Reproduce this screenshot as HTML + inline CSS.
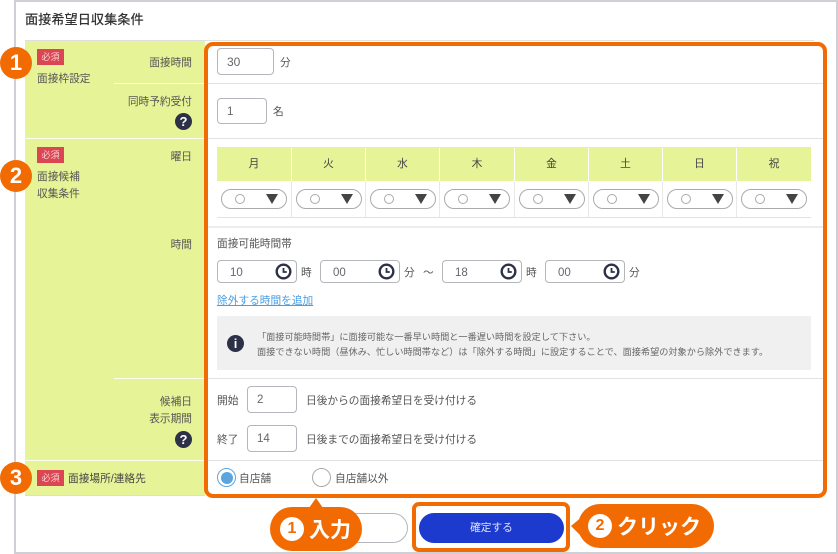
<!DOCTYPE html>
<html lang="ja"><head><meta charset="utf-8"><style>
html,body{margin:0;padding:0;background:#fff}
body{width:838px;height:554px;position:relative;overflow:hidden;font-family:"Liberation Sans","Noto Sans CJK JP",sans-serif;font-size:10.7px;color:#555}
.a,.t,.i,.c,.b,.q{position:absolute;box-sizing:border-box}
.t{white-space:nowrap;line-height:14px}
.r{text-align:right}
.i{border:1px solid #b4b6bc;border-radius:4px;background:#fff;color:#666;font-size:11.5px;padding-left:9px}
.l{position:absolute;height:1px;background:#e2e2e4}
.w{position:absolute;height:1px;background:#fbfdf0}
.b{width:27px;height:16px;background:#dc4552;color:#f7d5d8;font-size:9px;line-height:17px;text-align:center}
.c{width:32px;height:32px;border-radius:50%;background:#f26b02;color:#fff;font-size:22px;font-weight:bold;line-height:32px;text-align:center}
.q{width:17px;height:17px;border-radius:50%;background:#2d3147;color:#fff;font-size:13px;font-weight:bold;line-height:17px;text-align:center}
.h{position:absolute;top:147px;height:34px;background:#e6f396;color:#444;text-align:center;line-height:35px;font-size:10.7px}
.s{position:absolute;top:189px;width:66px;height:20px;border:1px solid #aaa;border-radius:10px;background:#fff;box-sizing:border-box}
.s:before{content:"";position:absolute;left:13px;top:4px;width:10px;height:10px;border:1px solid #aaa;border-radius:50%;box-sizing:border-box}
.s:after{content:"";position:absolute;left:44px;top:4px;border-left:6px solid transparent;border-right:6px solid transparent;border-top:10px solid #444}
.v{position:absolute;width:1px;top:147px;height:71px;background:#e8e8e8}
svg.k{position:absolute;width:17px;height:17px}
.p{position:absolute;background:#f26b02;color:#fff;font-weight:bold;font-size:21px;border-radius:22px;height:44px;line-height:47px;white-space:nowrap}
.n{display:inline-block;position:absolute;width:24px;height:24px;border-radius:50%;background:#fff;color:#f26b02;font-size:16px;line-height:24px;text-align:center;top:10px}
</style></head><body>
<div class="a" style="left:14px;top:0;width:824px;height:554px;border:2px solid #cfcfd5"></div>
<div class="t" style="left:25px;top:12px;font-size:13.2px;line-height:16px;color:#333;font-weight:500">面接希望日収集条件</div>

<div class="a" style="left:25px;top:40px;width:180px;height:456px;background:#e6f396;border-top:1px solid #dedee0;border-bottom:1px solid #dcdcdc"></div>
<div class="l" style="left:204px;top:40px;width:610px"></div>
<div class="w" style="left:114px;top:83px;width:90px"></div>
<div class="w" style="left:25px;top:138px;width:180px;height:1px"></div>
<div class="w" style="left:114px;top:378px;width:90px"></div>
<div class="w" style="left:25px;top:460px;width:180px"></div>
<div class="l" style="left:208px;top:83px;width:615px"></div>
<div class="l" style="left:208px;top:138px;width:615px"></div>
<div class="l" style="left:208px;top:226px;width:615px;height:2px;background:#ececec"></div>
<div class="l" style="left:208px;top:378px;width:615px"></div>
<div class="l" style="left:208px;top:460px;width:615px"></div>

<!-- left labels -->
<div class="b" style="left:37px;top:49px">必須</div>
<div class="t" style="left:37px;top:72px">面接枠設定</div>
<div class="b" style="left:37px;top:147px">必須</div>
<div class="t" style="left:37px;top:169px;line-height:16.5px">面接候補<br>収集条件</div>
<div class="b" style="left:37px;top:470px">必須</div>
<div class="t" style="left:68px;top:472px;color:#444">面接場所/連絡先</div>
<div class="t r" style="left:114px;width:78px;top:56px">面接時間</div>
<div class="t r" style="left:114px;width:78px;top:95px">同時予約受付</div>
<div class="q" style="left:175px;top:113px">?</div>
<div class="t r" style="left:114px;width:78px;top:150px">曜日</div>
<div class="t r" style="left:114px;width:78px;top:238px">時間</div>
<div class="t r" style="left:114px;width:78px;top:394px;line-height:17px">候補日<br>表示期間</div>
<div class="q" style="left:175px;top:431px">?</div>

<div class="c" style="left:0;top:47px">1</div>
<div class="c" style="left:0;top:160px">2</div>
<div class="c" style="left:0;top:462px">3</div>

<!-- right rows -->
<div class="i" style="left:217px;top:48px;width:57px;height:27px;line-height:27px;font-size:12px">30</div>
<div class="t" style="left:280px;top:56px">分</div>
<div class="i" style="left:217px;top:98px;width:50px;height:26px;line-height:26px">1</div>
<div class="t" style="left:273px;top:105px">名</div>

<!-- weekday table -->
<div class="a" style="left:217px;top:147px;width:594px;height:1px;background:#dedede"></div>
<div class="h" style="left:217px;width:74px">月</div>
<div class="h" style="left:292px;width:73px">火</div>
<div class="h" style="left:366px;width:73px">水</div>
<div class="h" style="left:440px;width:74px">木</div>
<div class="h" style="left:515px;width:73px">金</div>
<div class="h" style="left:589px;width:73px">土</div>
<div class="h" style="left:663px;width:73px">日</div>
<div class="h" style="left:737px;width:74px">祝</div>
<div class="v" style="left:291px;top:181px;height:37px"></div>
<div class="v" style="left:365px;top:181px;height:37px"></div>
<div class="v" style="left:439px;top:181px;height:37px"></div>
<div class="v" style="left:514px;top:181px;height:37px"></div>
<div class="v" style="left:588px;top:181px;height:37px"></div>
<div class="v" style="left:662px;top:181px;height:37px"></div>
<div class="v" style="left:736px;top:181px;height:37px"></div>
<div class="l" style="left:217px;top:217px;width:594px"></div>
<div class="s" style="left:221px"></div>
<div class="s" style="left:296px"></div>
<div class="s" style="left:370px"></div>
<div class="s" style="left:444px"></div>
<div class="s" style="left:519px"></div>
<div class="s" style="left:593px"></div>
<div class="s" style="left:667px"></div>
<div class="s" style="left:741px"></div>

<!-- time -->
<div class="t" style="left:217px;top:237px">面接可能時間帯</div>
<div class="i" style="left:217px;top:260px;width:80px;height:23px;line-height:24px;padding-left:12px">10</div>
<div class="t" style="left:301px;top:266px">時</div>
<div class="i" style="left:320px;top:260px;width:80px;height:23px;line-height:24px;padding-left:12px">00</div>
<div class="t" style="left:404px;top:266px">分</div>
<div class="t" style="left:423px;top:266px">～</div>
<div class="i" style="left:442px;top:260px;width:80px;height:23px;line-height:24px;padding-left:12px">18</div>
<div class="t" style="left:526px;top:266px">時</div>
<div class="i" style="left:545px;top:260px;width:80px;height:23px;line-height:24px;padding-left:12px">00</div>
<div class="t" style="left:629px;top:266px">分</div>
<svg class="k" style="left:275px;top:263px" viewBox="0 0 17 17"><circle cx="8.5" cy="8.5" r="6.8" fill="none" stroke="#2d3147" stroke-width="2.4"/><path d="M8.5 5V9H11.8" fill="none" stroke="#2d3147" stroke-width="1.8"/></svg>
<svg class="k" style="left:378px;top:263px" viewBox="0 0 17 17"><circle cx="8.5" cy="8.5" r="6.8" fill="none" stroke="#2d3147" stroke-width="2.4"/><path d="M8.5 5V9H11.8" fill="none" stroke="#2d3147" stroke-width="1.8"/></svg>
<svg class="k" style="left:500px;top:263px" viewBox="0 0 17 17"><circle cx="8.5" cy="8.5" r="6.8" fill="none" stroke="#2d3147" stroke-width="2.4"/><path d="M8.5 5V9H11.8" fill="none" stroke="#2d3147" stroke-width="1.8"/></svg>
<svg class="k" style="left:603px;top:263px" viewBox="0 0 17 17"><circle cx="8.5" cy="8.5" r="6.8" fill="none" stroke="#2d3147" stroke-width="2.4"/><path d="M8.5 5V9H11.8" fill="none" stroke="#2d3147" stroke-width="1.8"/></svg>
<div class="t" style="left:217px;top:294px;color:#4a9de0;text-decoration:underline">除外する時間を追加</div>

<div class="a" style="left:217px;top:316px;width:594px;height:54px;background:#f0f0f0"></div>
<div class="a" style="left:227px;top:335px;width:17px;height:17px;border-radius:50%;background:#2d3147;color:#fff;font-size:13px;font-weight:bold;line-height:17px;text-align:center">i</div>
<div class="t" style="left:257px;top:330px;font-size:9.17px;line-height:14.7px;color:#666">「面接可能時間帯」に面接可能な一番早い時間と一番遅い時間を設定して下さい。<br>面接できない時間（昼休み、忙しい時間帯など）は「除外する時間」に設定することで、面接希望の対象から除外できます。</div>

<!-- period -->
<div class="t" style="left:217px;top:394px">開始</div>
<div class="i" style="left:247px;top:386px;width:50px;height:27px;line-height:27px">2</div>
<div class="t" style="left:306px;top:394px">日後からの面接希望日を受け付ける</div>
<div class="t" style="left:217px;top:433px">終了</div>
<div class="i" style="left:247px;top:425px;width:50px;height:27px;line-height:27px">14</div>
<div class="t" style="left:306px;top:433px">日後までの面接希望日を受け付ける</div>

<div class="a" style="left:217px;top:468px;width:19px;height:19px;border:1px solid #5aa5e0;border-radius:50%;background:#fff"></div>
<div class="a" style="left:220.5px;top:471.5px;width:12px;height:12px;border-radius:50%;background:#5aa5e0"></div>
<div class="t" style="left:239px;top:472px">自店舗</div>
<div class="a" style="left:312px;top:468px;width:19px;height:19px;border:1px solid #aaa;border-radius:50%;background:#fff"></div>
<div class="t" style="left:335px;top:472px">自店舗以外</div>

<!-- orange frames -->
<div class="a" style="left:204px;top:42px;width:623px;height:456px;border:4px solid #f26b02;border-radius:9px"></div>
<div class="a" style="left:412px;top:502px;width:158px;height:50px;border:4px solid #f26b02;border-radius:7px;background:#fff"></div>

<!-- buttons -->
<div class="a" style="left:320px;top:513px;width:88px;height:30px;border:1px solid #b4b6bc;border-radius:15px;background:#fff"></div>
<div class="a" style="left:419px;top:513px;width:145px;height:30px;border-radius:15px;background:#1c3bce;color:#dfe4fa;text-align:center;line-height:31px;font-size:10.7px">確定する</div>

<!-- callouts -->
<svg class="a" style="left:309px;top:498px;width:14px;height:10px" viewBox="0 0 14 10"><path d="M0 10L7 0L14 10Z" fill="#f26b02"/></svg>
<div class="p" style="left:270px;top:507px;width:92px;padding-left:39px;box-sizing:border-box"><span class="n" style="left:10px">1</span>入力</div>
<svg class="a" style="left:571px;top:516px;width:12px;height:22px" viewBox="0 0 12 22"><path d="M12 0L0 10L12 22Z" fill="#f26b02"/></svg>
<div class="p" style="left:578px;top:504px;width:136px;padding-left:39px;box-sizing:border-box"><span class="n" style="left:10px">2</span>クリック</div>
</body></html>
